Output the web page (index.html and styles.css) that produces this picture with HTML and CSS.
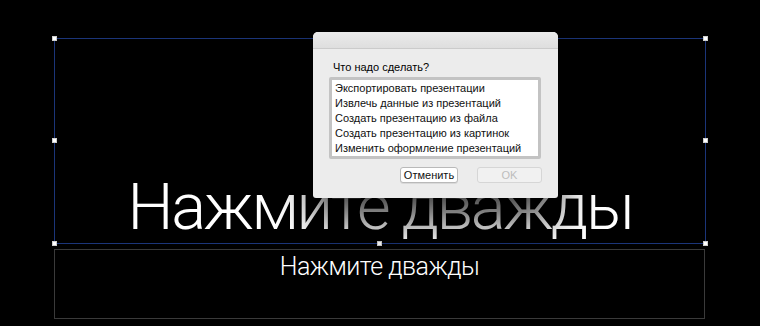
FILE: index.html
```html
<!DOCTYPE html>
<html lang="ru">
<head>
<meta charset="utf-8">
<title>Слайд</title>
<link rel="stylesheet" href="styles.css">
</head>
<body>
<div class="stage">
  <div class="title-box">
    <span class="handle h-tl"></span>
    <span class="handle h-tm"></span>
    <span class="handle h-tr"></span>
    <span class="handle h-ml"></span>
    <span class="handle h-mr"></span>
    <span class="handle h-bl"></span>
    <span class="handle h-bm"></span>
    <span class="handle h-br"></span>
    <div class="title-text">Нажмите дважды</div>
  </div>
  <div class="subtitle-box">
    <div class="subtitle-text">Нажмите дважды</div>
  </div>

  <div class="dialog">
    <div class="dialog-titlebar"></div>
    <div class="dialog-body">
      <div class="dialog-label">Что надо сделать?</div>
      <ul class="dialog-list">
        <li>Экспортировать презентации</li>
        <li>Извлечь данные из презентаций</li>
        <li>Создать презентацию из файла</li>
        <li>Создать презентацию из картинок</li>
        <li>Изменить оформление презентаций</li>
      </ul>
      <div class="dialog-buttons">
        <button class="btn btn-cancel">Отменить</button>
        <button class="btn btn-ok" disabled>OK</button>
      </div>
    </div>
  </div>
</div>
</body>
</html>
```

FILE: styles.css
```css
* { box-sizing: border-box; }

html, body {
  margin: 0;
  padding: 0;
  background: #000;
}

.stage {
  position: relative;
  width: 760px;
  height: 326px;
  overflow: hidden;
  padding: 38px 0 0 54px;
  display: flex;
  flex-direction: column;
  gap: 5px;
  font-family: Roboto, "Liberation Sans", sans-serif;
}

.title-box {
  position: relative;
  width: 652px;
  height: 206px;
  border: 1px solid #1b3579;
  display: flex;
  align-items: flex-end;
  justify-content: center;
  padding-bottom: 3px;
}

.title-text {
  color: #fff;
  font-weight: 300;
  font-size: 65px;
  line-height: 65px;
  letter-spacing: -2.3px;
  white-space: nowrap;
}

.handle {
  position: absolute;
  width: 5px;
  height: 5px;
  background: #fff;
  border: 1px solid #cfcfcf;
}
.h-tl { left: -3px; top: -3px; }
.h-tm { left: 322px; top: -3px; }
.h-tr { right: -3px; top: -3px; }
.h-ml { left: -3px; top: 99px; }
.h-mr { right: -3px; top: 99px; }
.h-bl { left: -3px; bottom: -3px; }
.h-bm { left: 322px; bottom: -3px; }
.h-br { right: -3px; bottom: -3px; }

.subtitle-box {
  width: 651px;
  height: 70px;
  border: 1px solid #3a3a3a;
  display: flex;
  justify-content: center;
  align-items: flex-start;
  padding-top: 4px;
}

.subtitle-text {
  color: #fff;
  font-weight: 300;
  font-size: 25px;
  line-height: 26px;
  letter-spacing: -0.5px;
  white-space: nowrap;
}

/* Dialog */
.dialog {
  position: absolute;
  left: 313px;
  top: 32px;
  width: 245px;
  height: 166px;
  background: #ececec;
  border-radius: 5px 5px 3px 3px;
  box-shadow: 0 20px 40px rgba(0, 0, 0, 0.8);
  font-family: "Liberation Sans", Arial, sans-serif;
  font-size: 11px;
  color: #111;
  display: flex;
  flex-direction: column;
  overflow: hidden;
}

.dialog-titlebar {
  height: 17px;
  background: linear-gradient(#ebebeb, #dedede);
  border-bottom: 1px solid #cbcbcb;
  flex: none;
}

.dialog-body {
  padding: 12px 16px 0 16px;
  display: flex;
  flex-direction: column;
}

.dialog-label {
  line-height: 13px;
  padding-left: 4px;
  margin-bottom: 3px;
  color: #000;
}

.dialog-list {
  list-style: none;
  margin: 0;
  padding: 1px 3px 0 3px;
  width: 212px;
  height: 82px;
  background: #fff;
  border: 3px solid #c3c3c3;
  border-radius: 2px;
}

.dialog-list li {
  line-height: 15px;
  white-space: nowrap;
}

.dialog-buttons {
  display: flex;
  justify-content: flex-end;
  gap: 19px;
  margin-top: 8px;
}

.btn {
  font-family: "Liberation Sans", Arial, sans-serif;
  font-size: 11px;
  height: 16px;
  line-height: 14px;
  padding: 0;
  border-radius: 3px;
  margin: 0;
}

.btn-cancel {
  width: 58px;
  background: #fff;
  border: 1px solid #b9b9b9;
  color: #111;
  box-shadow: 0 1px 0 rgba(0,0,0,0.08);
}

.btn-ok {
  width: 65px;
  background: #f1f1f1;
  border: 1px solid #d6d6d6;
  color: #bdbdbd;
}
```
